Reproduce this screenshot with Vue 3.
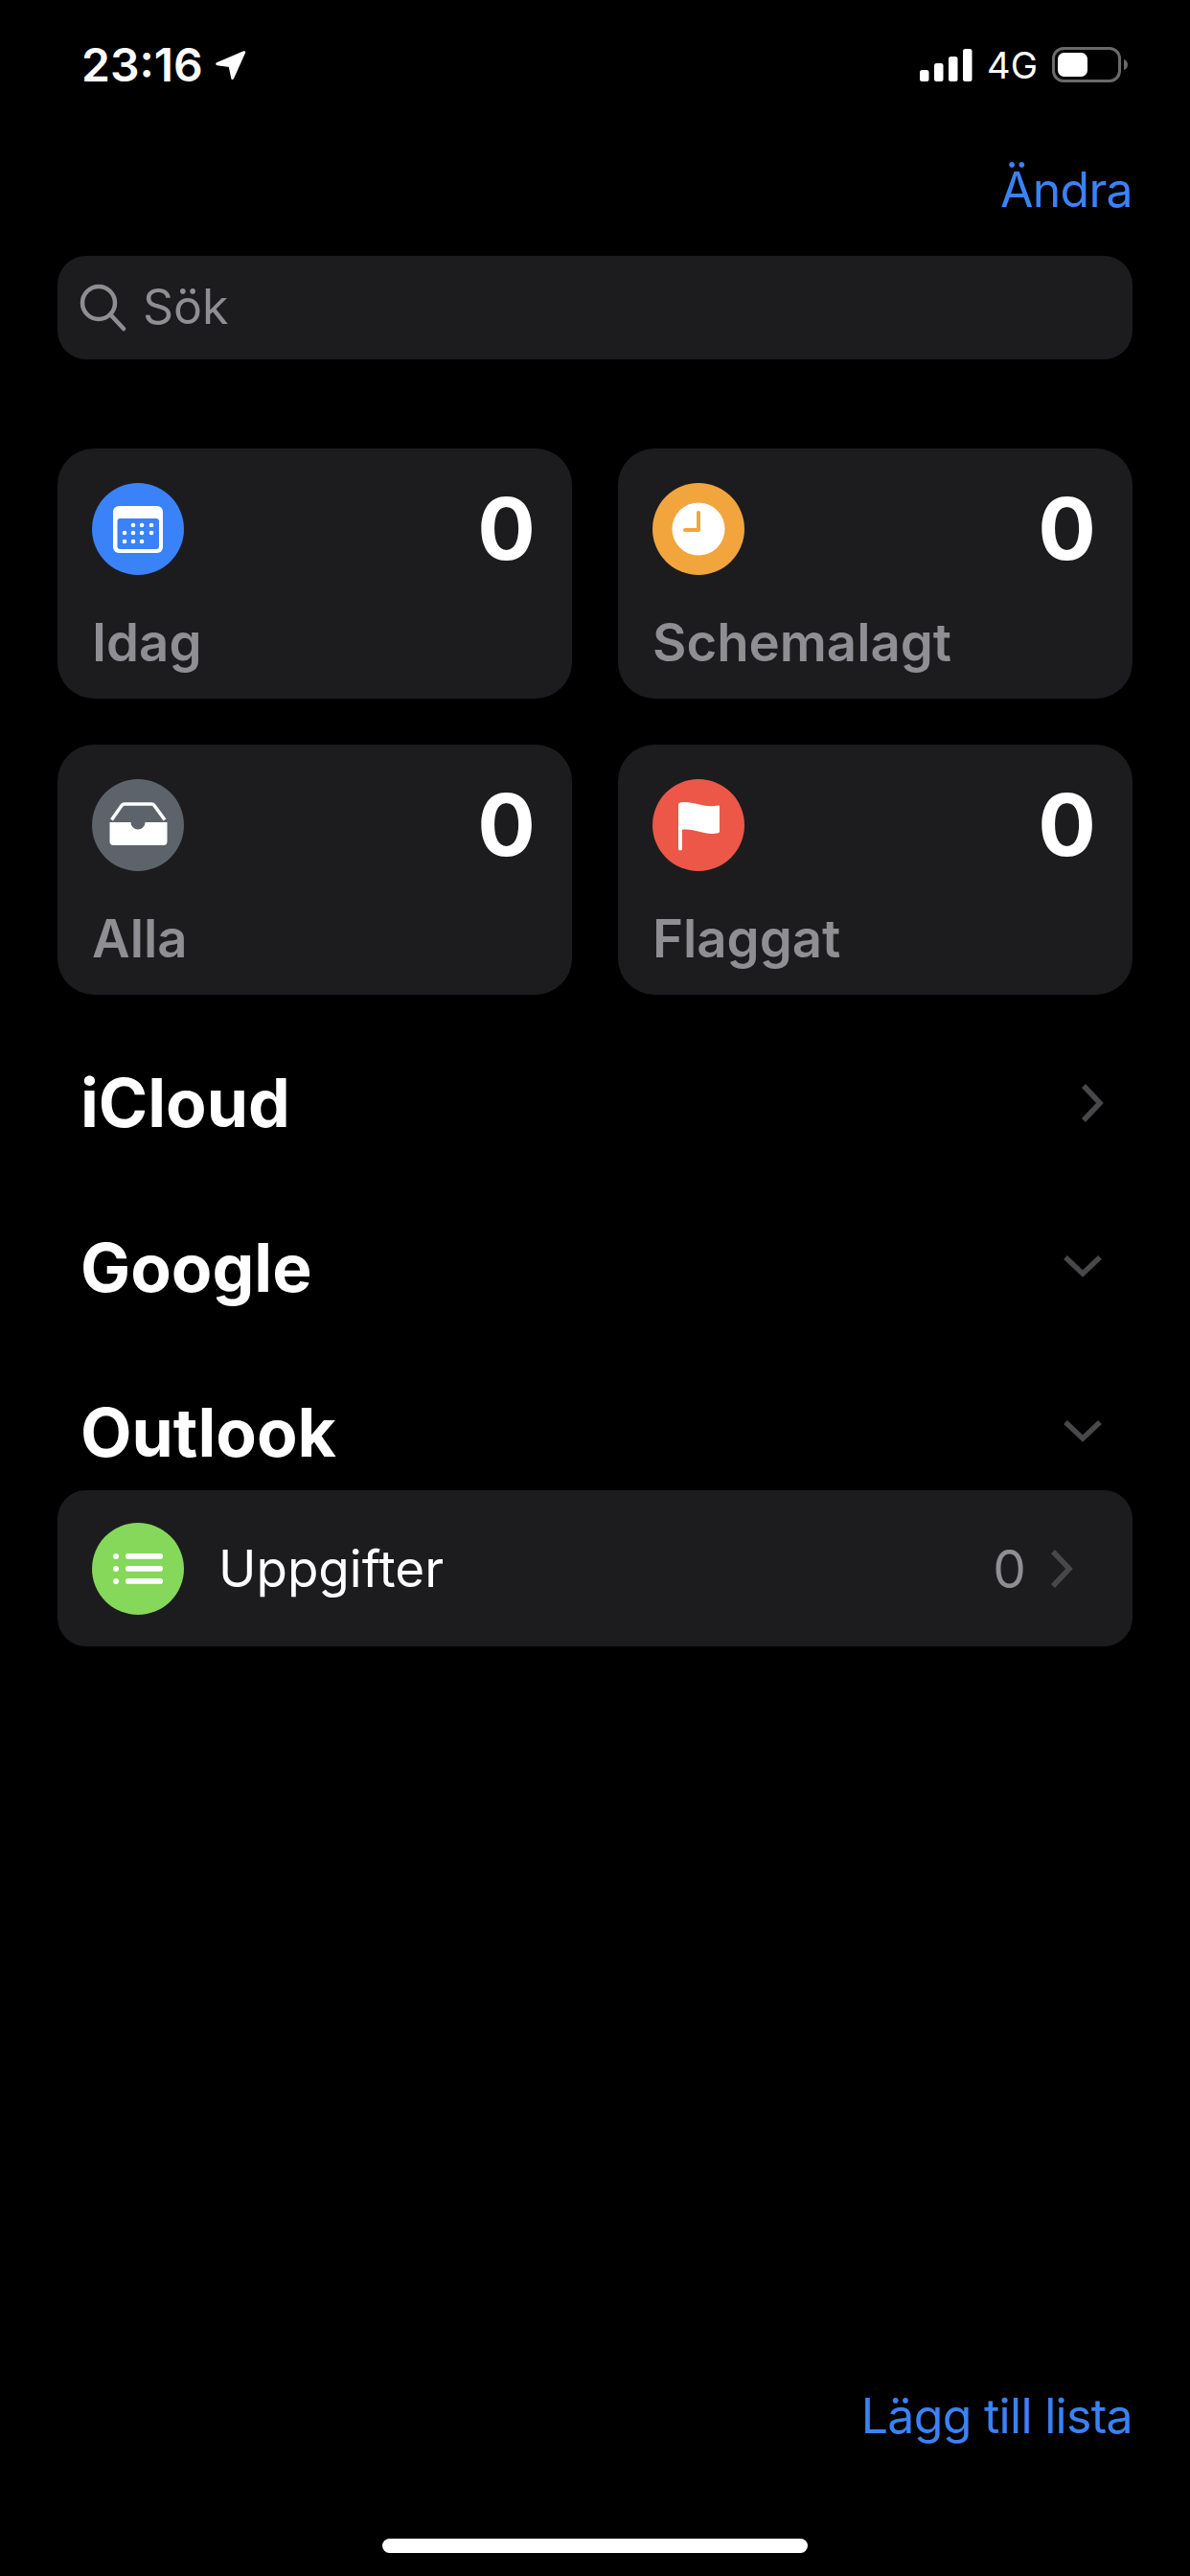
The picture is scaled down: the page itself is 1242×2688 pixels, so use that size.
<script setup>
const cards = [
  { name: 'Idag', icon: 'calendar', color: '#3a82f7' },
  { name: 'Schemalagt', icon: 'clock', color: '#f2a53d' },
  { name: 'Alla', icon: 'inbox', color: '#5c636b' },
  { name: 'Flaggat', icon: 'flag', color: '#ec5748' }
]
const calendarDots = [
  [43, 44], [52, 44], [62, 44],
  [34, 52], [43, 52], [52, 52], [62, 52],
  [34, 61], [43, 61], [52, 61]
]
const bars = [
  { x: 0, h: 12 },
  { x: 15, h: 19 },
  { x: 30, h: 26 },
  { x: 45, h: 34 }
]
</script>

<template>
  <div class="page">
    <div class="status">
      <div class="status-left">
        <span class="time">23:16</span>
        <svg class="arrow" width="32" height="32" viewBox="0 0 32 32">
          <path d="M1.500 14 29.500 2c.6-.3 1.100.2.900.8L18.300 29.800c-.3.700-1.100.6-1.300-.1l-2.600-12.500-12.700-1.800c-.8-.1-1-.9-.2-1.400z" fill="#fff" stroke="#fff" stroke-width="1.500" stroke-linejoin="round" />
        </svg>
      </div>
      <div class="status-right">
        <svg width="55" height="34" viewBox="0 0 55 34">
          <rect v-for="b in bars" :key="b.x" :x="b.x" :y="34 - b.h" width="9.5" :height="b.h" rx="2.5" fill="#fff" />
        </svg>
        <span class="net">4G</span>
        <svg width="79" height="37" viewBox="0 0 79 37">
          <rect x="1.5" y="1.5" width="69" height="34" rx="10.5" fill="none" stroke="#6a6a6a" stroke-width="3" />
          <rect x="6" y="6" width="31" height="25" rx="6.5" fill="#fff" />
          <path d="M75 13c2.5.8 4 3 4 5.500s-1.500 4.700-4 5.500z" fill="#6a6a6a" />
        </svg>
      </div>
    </div>

    <div class="nav"><span class="link">Ändra</span></div>

    <div class="search">
      <svg width="50" height="50" viewBox="0 0 50 50" fill="none" stroke="#8e8e93" stroke-width="4.500" stroke-linecap="round">
        <circle cx="20" cy="20" r="17" />
        <path d="M32.500 32.500 46 47" />
      </svg>
      <span>Sök</span>
    </div>

    <div class="grid">
      <div v-for="c in cards" :key="c.name" class="card">
        <div class="card-top">
          <svg class="badge" width="96" height="96" viewBox="0 0 96 96">
            <circle cx="48" cy="48" r="48" :fill="c.color" />
            <template v-if="c.icon === 'calendar'">
              <rect x="22" y="24" width="52" height="49" rx="6" fill="#fff" />
              <rect x="26.500" y="37" width="43.500" height="32" rx="3" :fill="c.color" />
              <circle v-for="d in calendarDots" :key="d.join()" :cx="d[0]" :cy="d[1]" r="2.300" fill="#fff" />
            </template>
            <template v-else-if="c.icon === 'clock'">
              <circle cx="48" cy="48" r="27.500" fill="#fff" />
              <path d="M48 31v18H34" fill="none" :stroke="c.color" stroke-width="4" stroke-linecap="round" stroke-linejoin="round" />
            </template>
            <template v-else-if="c.icon === 'inbox'">
              <path d="M20.500 42.500 31 27.500c.7-1 1.600-1.500 3-1.500h28c1.400 0 2.300.5 3 1.500l11 15" fill="none" stroke="#fff" stroke-width="3.500" />
              <path d="M18.500 45H40.500a7.500 7.500 0 0 0 15 0H78.500V65a4 4 0 0 1-4 4H22.500a4 4 0 0 1-4-4z" fill="#fff" />
            </template>
            <template v-else>
              <path d="M27 27c0-1.500 1-2.500 3-2.800 13-1.700 22 6.200 38.500 3.300 1-.2 1.500.4 1.500 1.300v25.800c0 .9-.5 1.500-1.500 1.700-15 3-24-6-39.500-3.300l-2 .4z" fill="#fff" />
              <rect x="27" y="26" width="4" height="48.500" rx="2" fill="#fff" />
            </template>
          </svg>
          <span class="count">0</span>
        </div>
        <div class="card-label">{{ c.name }}</div>
      </div>
    </div>

    <div class="section">
      <span>iCloud</span>
      <svg width="24" height="40" viewBox="0 0 24 40" fill="none" stroke="#48484a" stroke-width="5.500">
        <path d="M3 2 20 20 3 38" />
      </svg>
    </div>
    <div class="section">
      <span>Google</span>
      <svg class="chevron-down" width="40" height="24" viewBox="0 0 40 24" fill="none" stroke="#48484a" stroke-width="5.500">
        <path d="M2 3 20 20 38 3" />
      </svg>
    </div>
    <div class="section">
      <span>Outlook</span>
      <svg class="chevron-down" width="40" height="24" viewBox="0 0 40 24" fill="none" stroke="#48484a" stroke-width="5.500">
        <path d="M2 3 20 20 38 3" />
      </svg>
    </div>

    <div class="list">
      <svg class="badge" width="96" height="96" viewBox="0 0 96 96">
        <circle cx="48" cy="48" r="48" fill="#85d85a" />
        <g fill="#fff">
          <circle cx="25" cy="35" r="3" />
          <circle cx="25" cy="48" r="3" />
          <circle cx="25" cy="61" r="3" />
          <rect x="35" y="32" width="39" height="5.700" rx="2.800" />
          <rect x="35" y="45" width="39" height="5.700" rx="2.800" />
          <rect x="35" y="58" width="39" height="5.700" rx="2.800" />
        </g>
      </svg>
      <span class="list-name">Uppgifter</span>
      <span class="list-count">0</span>
      <svg width="24" height="40" viewBox="0 0 24 40" fill="none" stroke="#48484a" stroke-width="5.500">
        <path d="M3 2 20 20 3 38" />
      </svg>
    </div>

    <div class="footer"><span class="link">Lägg till lista</span></div>
    <div class="home-bar"></div>
  </div>
</template>

<style>
html, body {
  background: #000;
}
</style>

<style scoped>
.page {
  box-sizing: border-box;
  width: 1242px;
  height: 2688px;
  padding: 0 60px;
  display: flex;
  flex-direction: column;
  background: #000;
  color: #fff;
  font-family: Inter, "Noto Sans", sans-serif;
  overflow: hidden;
}
.status {
  height: 135px;
  margin: 0 -60px;
  padding: 0 65px 0 85px;
  display: flex;
  justify-content: space-between;
  align-items: center;
}
.status-left, .status-right {
  display: flex;
  align-items: center;
}
.time {
  font-size: 48px;
  font-weight: 600;
  line-height: 56px;
}
.arrow {
  margin-left: 13px;
}
.net {
  margin: 0 15px;
  font-size: 38px;
  line-height: 44px;
}
.nav {
  margin-top: 33px;
  display: flex;
  justify-content: flex-end;
}
.link {
  font-size: 50px;
  line-height: 60px;
  color: #3a82f7;
  letter-spacing: -0.7px;
}
.search {
  margin-top: 39px;
  height: 108px;
  padding: 0 0 2px 23px;
  box-sizing: border-box;
  display: flex;
  align-items: center;
  gap: 16px;
  background: #1c1c1e;
  border-radius: 30px;
  font-size: 50px;
  color: #8e8e93;
}
.search svg {
  margin-top: 2px;
}
.grid {
  margin-top: 93px;
  display: grid;
  grid-template-columns: 537px 537px;
  gap: 48px;
}
.card {
  box-sizing: border-box;
  height: 261px;
  padding: 36px 38px 0 36px;
  background: #1c1c1e;
  border-radius: 38px;
}
.card-top {
  display: flex;
  justify-content: space-between;
  align-items: center;
}
.badge {
  display: block;
  flex: none;
}
.count {
  font-size: 90px;
  font-weight: 700;
  line-height: 96px;
}
.card-label {
  margin-top: 38px;
  font-size: 54.5px;
  font-weight: 600;
  line-height: 64px;
  color: #8e8e93;
}
.section {
  height: 80px;
  padding: 0 30px 0 24px;
  display: flex;
  justify-content: space-between;
  align-items: center;
  font-size: 69.5px;
  font-weight: 700;
  line-height: 80px;
}
.chevron-down {
  margin: 0 2px 5px 0;
}
.section + .section {
  margin-top: 92px;
}
.grid + .section {
  margin-top: 73px;
}
.list {
  margin-top: 20px;
  height: 163px;
  padding: 0 62px 0 36px;
  display: flex;
  align-items: center;
  background: #1c1c1e;
  border-radius: 30px;
}
.list-name {
  margin-left: 36px;
  flex: 1;
  font-size: 53px;
}
.list-count {
  margin-right: 25px;
  font-size: 55px;
  color: #8e8e93;
}
.footer {
  margin-top: auto;
  display: flex;
  justify-content: flex-end;
}
.home-bar {
  flex: none;
  align-self: center;
  width: 444px;
  height: 15px;
  margin: 98px 0 24px;
  background: #fff;
  border-radius: 8px;
}
</style>
